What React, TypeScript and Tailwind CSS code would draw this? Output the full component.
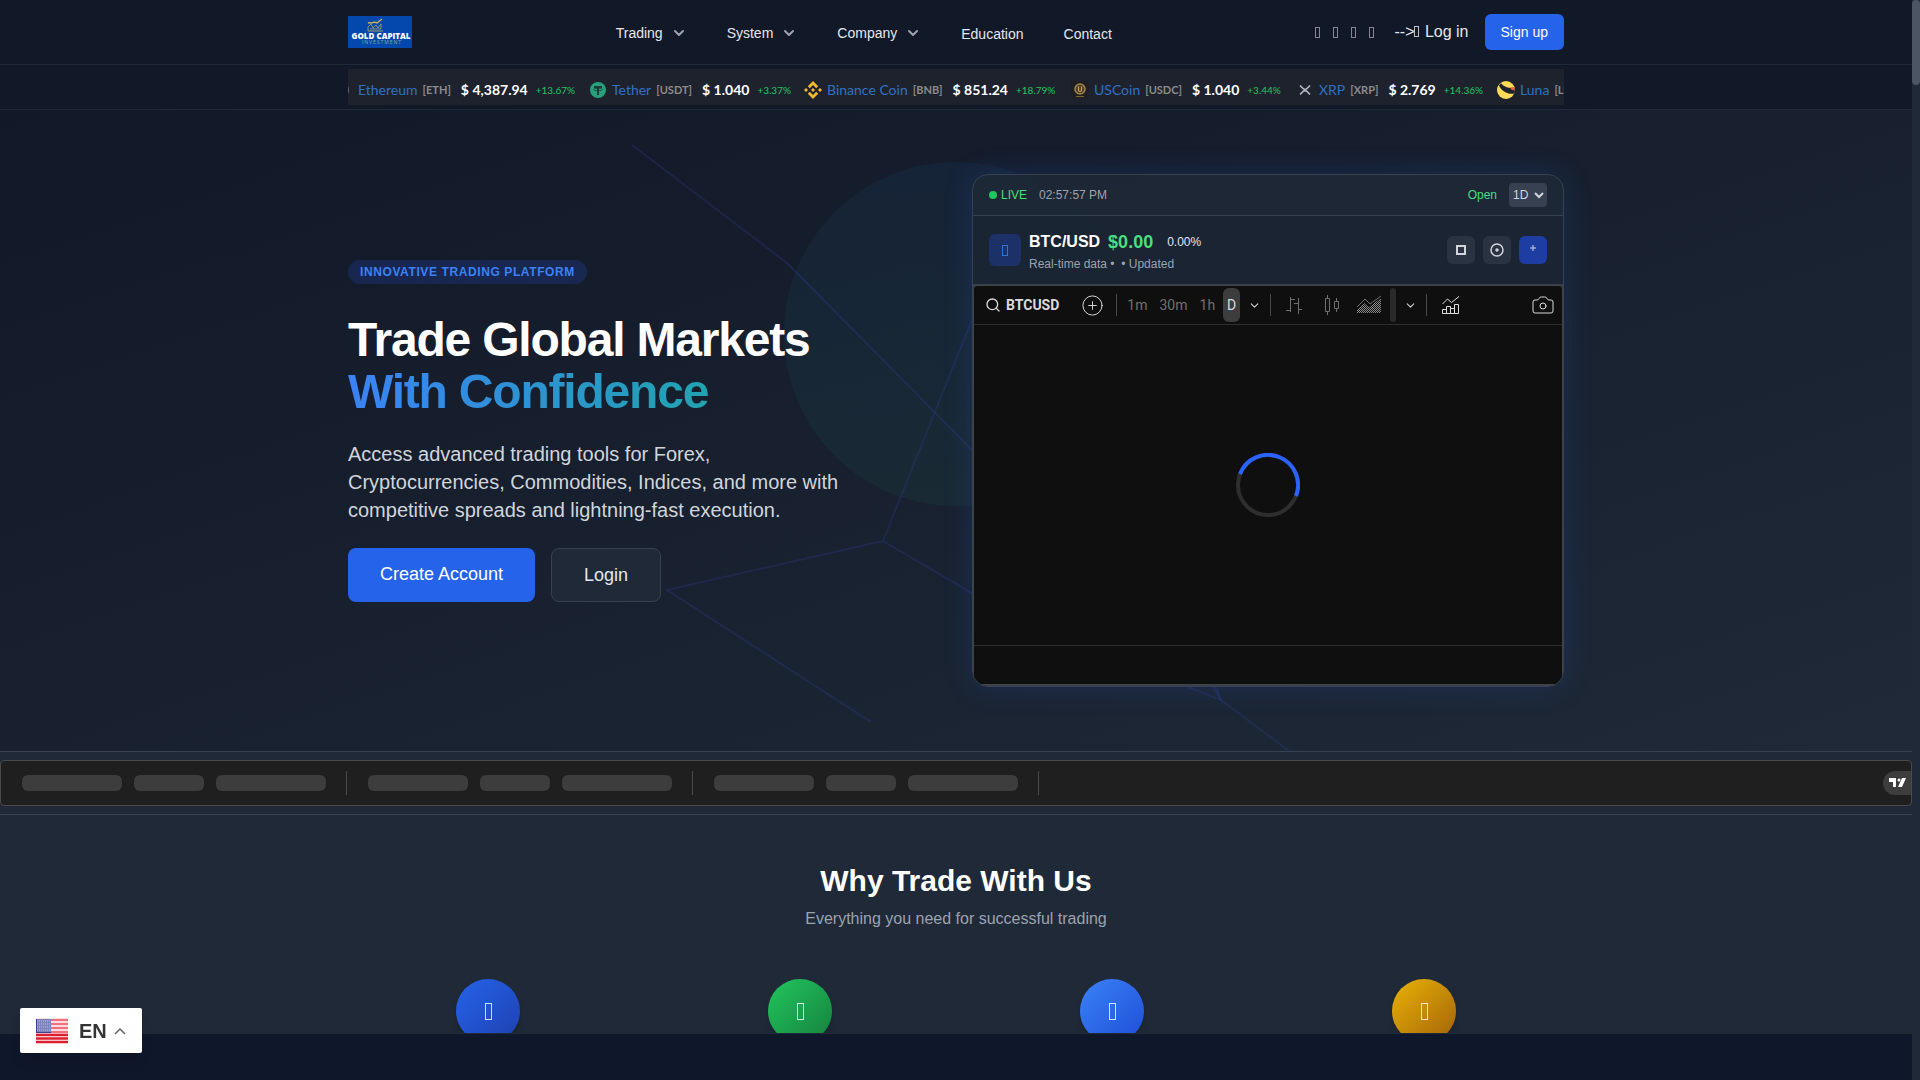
import { Camera, ChevronDown, CirclePlus, Search } from 'lucide-react'

const menus = ['Trading', 'System', 'Company']
const links = ['Education', 'Contact']
const socials = ['Facebook', 'Twitter', 'Instagram', 'LinkedIn']

const coins = [
  { name: 'Ethereum', code: 'ETH', price: '4,387.94', change: '+13.67%', width: 'w-[254px]', icon: <EthIcon /> },
  { name: 'Tether', code: 'USDT', price: '1.040', change: '+3.37%', width: 'w-[215px]', icon: <TetherIcon /> },
  { name: 'Binance Coin', code: 'BNB', price: '851.24', change: '+18.79%', width: 'w-[267px]', icon: <BnbIcon /> },
  { name: 'USCoin', code: 'USDC', price: '1.040', change: '+3.44%', width: 'w-[225px]', icon: <UsdcIcon /> },
  { name: 'XRP', code: 'XRP', price: '2.769', change: '+14.36%', width: 'w-[201px]', icon: <XrpIcon /> },
  { name: 'Luna', code: 'LUNA', price: '', change: '', width: 'w-[120px]', icon: <LunaIcon /> },
]

const features = [
  'from-[#2563eb] to-[#1e40af]',
  'from-[#22c55e] to-[#15803d]',
  'from-[#3b82f6] to-[#1d4ed8]',
  'from-[#eab308] to-[#a16207]',
]

// narrow outlined box, the size comes from the caller
function Glyph({ className }: { className: string }) {
  return <i aria-hidden="true" className={`inline-block border border-current opacity-80 ${className}`} />
}

function EthIcon() {
  return (
    <svg viewBox="0 0 18 18" className="size-[18px]">
      <circle cx="7" cy="9" r="7" fill="#6c6c6d" />
      <path d="M7 3l4 6-4 2.500-4-2.500z" fill="#b9bcc4" />
      <path d="M3 10l4 5 4-5-4 2.500z" fill="#8c8f99" />
    </svg>
  )
}

function TetherIcon() {
  return (
    <svg viewBox="0 0 18 18" className="size-[18px]">
      <circle cx="9" cy="9" r="8" fill="#26a17b" />
      <path d="M5 5h8v2h-3v7H8V7H5z" fill="#1c3a3a" />
      <ellipse cx="9" cy="8.500" rx="4.500" ry="1.200" fill="none" stroke="#1c3a3a" strokeWidth=".7" />
    </svg>
  )
}

function BnbIcon() {
  return (
    <svg viewBox="0 0 18 18" className="size-[18px]" fill="#f3ba2f">
      <path d="M9 0l5.200 5.200-2 2L9 4 5.800 7.200l-2-2z" />
      <path d="M9 18l-5.200-5.200 2-2L9 14l3.200-3.200 2 2z" />
      <path d="M2 7l2 2-2 2-2-2zM16 7l2 2-2 2-2-2zM9 7l2 2-2 2-2-2z" />
    </svg>
  )
}

function UsdcIcon() {
  return (
    <svg viewBox="0 0 18 18" className="size-[18px]">
      <rect width="18" height="18" fill="#1f1e22" />
      <circle cx="9" cy="8" r="5" fill="#4a3d24" stroke="#a5854c" strokeWidth="1.500" />
      <path d="M7.500 5.500v3.500a1.500 1.500 0 0 0 3 0V5.500" fill="none" stroke="#c79f5c" strokeWidth="1.200" />
      <path d="M5 15.500h8" stroke="#7b6238" strokeWidth="1" />
    </svg>
  )
}

function XrpIcon() {
  return (
    <svg viewBox="0 0 18 18" className="size-[18px]" fill="none" stroke="#b5b8bd" strokeWidth="1.700">
      <path d="M4 4.500l3 3a2.800 2.800 0 0 0 4 0l3-3M4 13.500l3-3a2.800 2.800 0 0 1 4 0l3 3" />
    </svg>
  )
}

function LunaIcon() {
  return (
    <svg viewBox="0 0 18 18" className="size-[18px]">
      <circle cx="9" cy="9" r="9" fill="#ffdb57" />
      <path d="M4 2C6 5 11 8 17.500 6.500c.8 2 .6 4-.2 6C12 14 4 10 2 4.500z" fill="#1e222d" />
      <path d="M13 6.500l4.500-.5.500 3.500-3.500-.7z" fill="#e8663c" />
    </svg>
  )
}

function Logo() {
  return (
    <a href="/" aria-label="Gold Capital Investment">
      <svg viewBox="0 0 64 32" className="h-8 w-16 bg-[#0448ad]">
        <g fill="none" stroke="#c5b254" strokeWidth="1">
          <path d="M20 7c2-1 4 1 6-1l3 1 5-4" strokeWidth="1.500" />
          <path d="M20 15v-4l3-3 2 4 3-3 2 3 3-4v5M22 13h11" opacity=".7" />
          <path d="M20 15h15" opacity=".8" />
        </g>
        <text x="33" y="23" textAnchor="middle" fontSize="8" fontWeight="800" fill="#fff" fontFamily="Open Sans, sans-serif">
          GOLD CAPITAL
        </text>
        <text x="34" y="28" textAnchor="middle" fontSize="5" letterSpacing="1" fill="#8fa98a" fontFamily="Open Sans, sans-serif">
          INVESTMENT
        </text>
      </svg>
    </a>
  )
}

function Header() {
  return (
    <header className="border-b border-[#1f2937] bg-[#111827]">
      <div className="mx-auto flex h-16 max-w-7xl items-center justify-between px-8">
        <Logo />
        <nav className="flex items-center gap-6 pt-px text-sm text-[#e5e7eb]">
          {menus.map((menu) => (
            <button key={menu} type="button" className="flex items-center gap-2 px-2 py-2">
              {menu}
              <ChevronDown className="size-4 text-[#9ca3af]" strokeWidth={3} />
            </button>
          ))}
          {links.map((link) => (
            <a key={link} href="#" className="px-2 pt-[2px]">
              {link}
            </a>
          ))}
        </nav>
        <div className="flex items-center">
          <div className="flex gap-[13px] text-[#9ca3af]">
            {socials.map((social) => (
              <a key={social} href="#" aria-label={social} className="flex">
                <Glyph className="h-[11px] w-[5px]" />
              </a>
            ))}
          </div>
          <a href="#" className="ml-5 text-[#e5e7eb]">
            --&gt;
            <Glyph className="mr-px h-[11px] w-[5px]" /> Log in
          </a>
          <a href="#" className="ml-4 rounded-md bg-[#2563eb] px-4 py-2 text-sm text-white">
            Sign up
          </a>
        </div>
      </div>
    </header>
  )
}

function Ticker() {
  return (
    <div className="border-b border-[#1f2937] bg-[#111827] py-1">
      <div className="mx-auto max-w-7xl px-8">
        <div className="flex h-9 items-center overflow-hidden bg-[#1e222d] font-['Lato','Open_Sans',sans-serif]">
          <div className="-ml-[13px] flex shrink-0 items-center pt-[6px]">
            {coins.map((coin) => (
              <div key={coin.code} className={`flex shrink-0 items-center whitespace-nowrap ${coin.width}`}>
                {coin.icon}
                <a href="#" className="ml-[5px] text-sm text-[#2f72c4]">
                  {coin.name}
                </a>
                <span className="ml-[5px] pt-px text-[11px] font-bold text-[#8b8b8b]">[{coin.code}]</span>
                {coin.price && (
                  <>
                    <span className="ml-[10px] text-sm font-bold text-white">$ {coin.price}</span>
                    <span className="ml-2 pt-px text-[10px] text-[#22c564]">{coin.change}</span>
                  </>
                )}
              </div>
            ))}
          </div>
        </div>
      </div>
    </div>
  )
}

function HeroBackdrop() {
  return (
    <svg viewBox="0 0 1912 641" preserveAspectRatio="xMidYMid slice" className="absolute inset-0 size-full" aria-hidden="true">
      <defs>
        <linearGradient id="orb" x1="0" y1="0" x2="0" y2="1">
          <stop offset="0" stopColor="#1d6fb8" />
          <stop offset="1" stopColor="#1f8a6a" />
        </linearGradient>
      </defs>
      <circle cx="956" cy="224" r="172" fill="url(#orb)" opacity=".08" />
      <g fill="none" stroke="#3340a0" strokeOpacity=".25" strokeWidth="2">
        <path d="M632 35l155 118 185 187 244 237" />
        <path d="M990 165L883 431l89 52 130 60 119 47-14-23M883 431l-216 49 204 132" />
        <path d="M1216 577l5 13 68 51" />
      </g>
    </svg>
  )
}

function ChartToolbar() {
  return (
    <div className="flex h-[39px] items-center border-b border-[#2e2e2e] pr-[7px] font-['Roboto',sans-serif] text-sm text-[#6f6f6f]">
      <button type="button" className="ml-[11px] flex items-center gap-[5px] font-bold text-[#dbdbdb]">
        <Search className="size-4" strokeWidth={2} />
        BTCUSD
      </button>
      <button type="button" aria-label="Compare symbol" className="ml-[22px] text-[#dbdbdb]">
        <CirclePlus className="size-[23px]" strokeWidth={1} />
      </button>
      <span className="ml-3 h-[22px] w-px bg-[#4a4a4a]" />
      <button type="button" className="ml-[10px]">1m</button>
      <button type="button" className="ml-3">30m</button>
      <button type="button" className="ml-3">1h</button>
      <button type="button" className="ml-2 h-[34px] rounded-md bg-[#3d3d3d] px-1 text-[#dbdbdb]">D</button>
      <button type="button" aria-label="More intervals" className="ml-2 text-[#cfcfcf]">
        <ChevronDown className="size-[13px]" />
      </button>
      <span className="ml-[9px] h-[22px] w-px bg-[#4a4a4a]" />
      <button type="button" aria-label="Bars" className="ml-3">
        <svg viewBox="0 0 22 22" className="size-[22px]" fill="none" stroke="currentColor">
          <path d="M7.500 3v15M3 16.500h4.500M7.500 5.500H12M15.500 4v16M11 9.500h4.500M15.500 15.500H19" />
        </svg>
      </button>
      <button type="button" aria-label="Candles" className="ml-4">
        <svg viewBox="0 0 22 22" className="size-[22px]" fill="none" stroke="currentColor">
          <path d="M4.500 4.500h4v13h-4zM6.500 1v3.500M6.500 17.500V21M13.500 7.500h4v7h-4zM15.500 4v3.500M15.500 14.500V18" />
        </svg>
      </button>
      <button type="button" aria-label="Area" className="ml-[13px]">
        <svg viewBox="0 0 26 20" className="h-5 w-[26px]">
          <defs>
            <pattern id="dots" width="2" height="2" patternUnits="userSpaceOnUse">
              <path d="M0 0h1v1H0zM1 1h1v1H1z" fill="#8a8a8a" />
            </pattern>
          </defs>
          <path d="M1 18V15l7-7 5 4L25 3v15z" fill="url(#dots)" />
          <path d="M1 12l8-8 5 5L25 1" fill="none" stroke="currentColor" />
        </svg>
      </button>
      <span className="ml-2 h-[34px] w-[6px] rounded-sm bg-[#2a2a2a]" />
      <button type="button" aria-label="More styles" className="ml-2 text-[#cfcfcf]">
        <ChevronDown className="size-[13px]" />
      </button>
      <span className="ml-[9px] h-[22px] w-px bg-[#4a4a4a]" />
      <button type="button" aria-label="Indicators" className="ml-[14px] text-[#dbdbdb]">
        <svg viewBox="0 0 20 20" className="size-5" fill="none" stroke="currentColor">
          <path d="M1.500 9l5-5 4 3.500L18 1.500M1.500 18.500v-4h4v4zM5.500 18.500v-7h4v7M9.500 18.500v-5h4v5M13.500 18.500v-9h4v9h-16" />
        </svg>
      </button>
      <button type="button" aria-label="Snapshot" className="ml-auto text-[#dbdbdb]">
        <Camera className="size-6" strokeWidth={1} />
      </button>
    </div>
  )
}

function ChartCard() {
  return (
    <div className="overflow-hidden rounded-2xl border border-[#374151] bg-[#1f2937]/80 shadow-[0_0_30px_rgba(37,99,235,0.18)]">
      <div className="flex items-center justify-between border-b border-[#374151] px-4 py-2 text-xs">
        <div className="flex items-center">
          <span className="size-2 rounded-full bg-[#22c55e]" />
          <span className="ml-1 text-[#4ade80]">LIVE</span>
          <span className="ml-3 text-[#9ca3af]">02:57:57 PM</span>
        </div>
        <div className="flex items-center gap-3">
          <span className="text-[#4ade80]">Open</span>
          <select aria-label="Interval" className="h-6 rounded-sm bg-[#374151] text-xs text-[#d1d5db]">
            <option>1D</option>
            <option>1W</option>
          </select>
        </div>
      </div>
      <div className="flex items-center justify-between border-b border-[#374151] bg-[#111827]/20 px-4 py-3">
        <div className="flex items-center gap-2">
          <span className="flex size-8 items-center justify-center rounded-md bg-[#1e3a8a]/60 text-[#3b82f6]">
            <Glyph className="h-[11px] w-[6px]" />
          </span>
          <div>
            <div className="flex h-7 items-center">
              <span className="font-bold text-white">BTC/USD</span>
              <span className="ml-2 text-lg font-bold text-[#4ade80]">$0.00</span>
              <span className="ml-[14px] text-xs text-[#e5e7eb]">0.00%</span>
            </div>
            <p className="text-xs text-[#9ca3af]">Real-time data •&nbsp;&nbsp;• Updated</p>
          </div>
        </div>
        <div className="flex gap-2 text-[#d1d5db]">
          <button type="button" aria-label="Fullscreen" className="flex size-7 items-center justify-center rounded-md bg-[#374151]/50">
            <svg viewBox="0 0 12 12" className="size-3" fill="none" stroke="currentColor" strokeWidth="2">
              <path d="M2 2h8v8H2z" />
            </svg>
          </button>
          <button type="button" aria-label="Focus" className="flex size-7 items-center justify-center rounded-md bg-[#374151]/50">
            <svg viewBox="0 0 14 14" className="size-[14px]" fill="none" stroke="currentColor" strokeWidth="1.500">
              <circle cx="7" cy="7" r="6" />
              <circle cx="7" cy="7" r="1" fill="currentColor" />
            </svg>
          </button>
          <button type="button" aria-label="Add" className="flex size-7 items-center justify-center rounded-md bg-[#1e40af]/90 pb-1 text-[#d1d5db]">
            <svg viewBox="0 0 6 6" className="size-[6px]" stroke="currentColor">
              <path d="M3 0v6M0 3h6" />
            </svg>
          </button>
        </div>
      </div>
      <div className="border-b border-[#374151] bg-[#374151]">
        <div className="flex h-[400px] flex-col rounded border border-[#434343] bg-[#0f0f0f]">
          <ChartToolbar />
          <div className="flex flex-1 items-center justify-center">
            <svg viewBox="0 0 64 64" className="size-16" fill="none" strokeWidth="4">
              <circle cx="32" cy="32" r="30" stroke="#2e2e2e" />
              <path d="M4 21a30 30 0 0 1 56 22" stroke="#2962ff" />
            </svg>
          </div>
          <div className="h-[39px] border-t border-[#2e2e2e]" />
        </div>
      </div>
    </div>
  )
}

function Hero() {
  return (
    <section className="relative overflow-hidden bg-linear-to-br/srgb from-[#111827] to-[#1f2937]">
      <HeroBackdrop />
      <div className="relative mx-auto grid max-w-7xl grid-cols-2 items-center gap-8 px-8 py-16">
        <div>
          <span className="flex h-6 w-fit items-center rounded-full bg-[#1e3a8a]/40 px-3 text-xs font-bold tracking-wider text-[#3b82f6] uppercase">
            Innovative Trading Platform
          </span>
          <h1 className="mt-[30px] text-5xl leading-[52px] font-bold tracking-tight text-white">
            Trade Global Markets
            <span className="block bg-linear-to-r/srgb from-[#3b82f6] to-[#10b981] bg-clip-text text-transparent">With Confidence</span>
          </h1>
          <p className="mt-[22px] max-w-lg text-xl leading-7 text-[#d1d5db]">
            Access advanced trading tools for Forex, Cryptocurrencies, Commodities, Indices, and more with competitive spreads and
            lightning-fast execution.
          </p>
          <div className="mt-6 flex gap-4 text-lg">
            <a href="#" className="flex h-[54px] items-center rounded-lg bg-[#2563eb] px-8 pb-[2px] text-white">
              Create Account
            </a>
            <a href="#" className="flex h-[54px] items-center rounded-lg border border-[#374151] bg-[#1f2937] px-8 text-[#e5e7eb]">
              Login
            </a>
          </div>
        </div>
        <ChartCard />
      </div>
    </section>
  )
}

function MarketStrip() {
  return (
    <section className="border-y border-[#374151] bg-[#1f2937] py-2">
      <div className="flex h-[46px] items-center rounded border border-[#4a4a4a] bg-[#1f1f1f]">
        {[0, 1, 2].map((group) => (
          <div key={group} className="flex h-6 items-center gap-3 border-r border-[#4a4a4a] pr-5 pl-[21px]">
            <span className="h-4 w-[100px] rounded-md bg-[#3d3d3d]" />
            <span className="h-4 w-[70px] rounded-md bg-[#3d3d3d]" />
            <span className="h-4 w-[110px] rounded-md bg-[#3d3d3d]" />
          </div>
        ))}
        <a href="#" aria-label="TradingView" className="ml-auto flex h-6 w-7 items-center rounded-l-full bg-[#3d3d3d] pl-[6px] text-white">
          <svg viewBox="0 0 18 10" className="h-[10px] w-[18px]" fill="currentColor">
            <path d="M0 0h7v9H4V4H0zM13 0h4l-4 9H9z" />
            <circle cx="10" cy="2" r="1.500" />
          </svg>
        </a>
      </div>
    </section>
  )
}

function WhyTrade() {
  return (
    <section className="bg-[#1f2937] pt-12 pb-px">
      <div className="mx-auto max-w-7xl px-8">
        <div className="text-center">
          <h2 className="text-3xl leading-9 font-bold text-white">Why Trade With Us</h2>
          <p className="mt-2 text-[#9ca3af]">Everything you need for successful trading</p>
        </div>
        <div className="mt-12 grid h-[54px] grid-cols-4 gap-8 overflow-hidden">
          {features.map((gradient) => (
            <div key={gradient} className="flex justify-center">
              <span className={`flex size-16 items-center justify-center rounded-full bg-linear-to-br/srgb text-white shadow-lg ${gradient}`}>
                <Glyph className="h-[17px] w-[7px]" />
              </span>
            </div>
          ))}
        </div>
      </div>
    </section>
  )
}

function UsFlag() {
  return (
    <svg viewBox="0 0 32 26" className="h-[26px] w-8">
      <rect y="1" width="32" height="24" fill="#fff" />
      <path d="M0 2h32M0 6h32M0 10h32M0 14h32" stroke="#f0707c" strokeWidth="2.500" />
      <path d="M0 17h32M0 20.500h32M0 24h32" stroke="#dc1f2e" strokeWidth="2.500" />
      <rect y="1" width="15" height="14" fill="#7b82bd" />
      <path d="M1 3h14M1 6h14M1 9h14M1 12h14" stroke="#c3c6e3" strokeDasharray="1 1" />
      <path d="M0 14.500h15M.5 1v14" stroke="#3b428f" />
    </svg>
  )
}

function LanguageSwitch() {
  return (
    <button
      type="button"
      className="fixed bottom-[27px] left-5 flex h-[45px] items-center rounded-xs bg-white px-4 text-xl font-bold text-[#333] shadow-lg"
    >
      <UsFlag />
      <span className="ml-[11px]">EN</span>
      <svg viewBox="0 0 12 8" className="ml-[7px] h-2 w-3" fill="none" stroke="#666" strokeWidth="1.500">
        <path d="M1 7l5-5 5 5" />
      </svg>
    </button>
  )
}

export default function App() {
  return (
    <div className="flex min-h-screen bg-[#0f172a] font-['Liberation_Sans',Arial,sans-serif]">
      <div className="min-w-0 flex-1">
        <Header />
        <Ticker />
        <main>
          <Hero />
          <MarketStrip />
          <WhyTrade />
        </main>
      </div>
      <div className="w-2 bg-[#1f2937]">
        <div className="h-[85px] rounded-full bg-[#4b5563]" />
      </div>
      <LanguageSwitch />
    </div>
  )
}
